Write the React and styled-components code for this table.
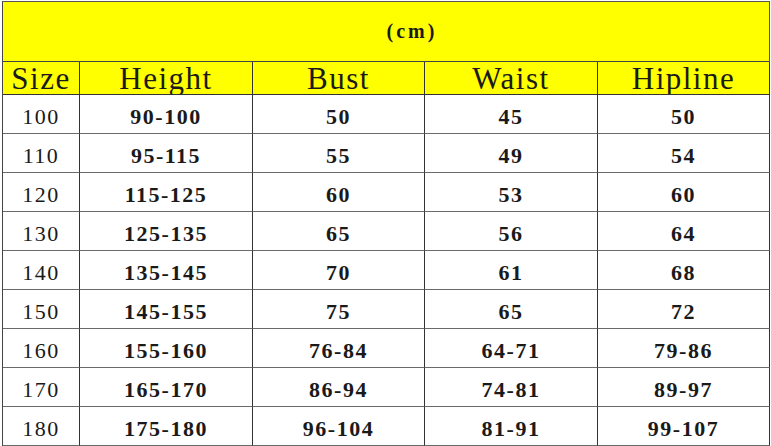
import React from 'react'
import styled, { createGlobalStyle } from 'styled-components'

const GlobalStyle = createGlobalStyle`
    body {
        margin: 0;
        background: #ffffff;
    }
`

const rows = [
    ['100', '90-100', '50', '45', '50'],
    ['110', '95-115', '55', '49', '54'],
    ['120', '115-125', '60', '53', '60'],
    ['130', '125-135', '65', '56', '64'],
    ['140', '135-145', '70', '61', '68'],
    ['150', '145-155', '75', '65', '72'],
    ['160', '155-160', '76-84', '64-71', '79-86'],
    ['170', '165-170', '86-94', '74-81', '89-97'],
    ['180', '175-180', '96-104', '81-91', '99-107'],
]

const headers = ['Size', 'Height', 'Bust', 'Waist', 'Hipline']

const Page = styled.div`
    padding: 1px 0 0 2px;
`

const Chart = styled.div`
    display: grid;
    grid-template-columns: 77px 173px 172px 173px 172px;
    grid-template-rows: 60px 33px;
    grid-auto-rows: 39px;
    width: 768px;
    border-top: 1px solid #555;
    border-left: 1px solid #444;
    box-sizing: border-box;
    font-family: "Liberation Serif", "Noto Sans CJK SC", serif;
    color: #1a1a1a;
`

const Title = styled.div`
    grid-column: 1 / -1;
    display: flex;
    align-items: center;
    justify-content: center;
    padding-left: 52px;
    background: #ffff00;
    border-right: 1px solid #555;
    border-bottom: 1px solid #444;
    font-size: 20px;
    font-weight: bold;
    letter-spacing: 3px;
`

const Cell = styled.div`
    display: flex;
    align-items: center;
    justify-content: center;
    background: ${p => (p.$head ? '#ffff00' : '#ffffff')};
    border-right: 1px solid #333;
    border-bottom: 1px solid ${p => (p.$head ? '#333' : '#6a6a6a')};
    font-size: ${p => (p.$head ? '31px' : '22px')};
    font-weight: ${p => (p.$bold ? 'bold' : 'normal')};
    letter-spacing: 1.5px;
    padding-top: ${p => (p.$head ? '2px' : '5px')};
    white-space: nowrap;
    overflow: hidden;
`

export default function App() {
    return (
        <Page>
            <GlobalStyle />
            <Chart>
                <Title>(cm)</Title>
                {headers.map(h => (
                    <Cell key={h} $head>{h}</Cell>
                ))}
                {rows.map(row =>
                    row.map((v, i) => (
                        <Cell key={row[0] + '-' + i} $bold={i > 0}>{v}</Cell>
                    ))
                )}
            </Chart>
        </Page>
    )
}
